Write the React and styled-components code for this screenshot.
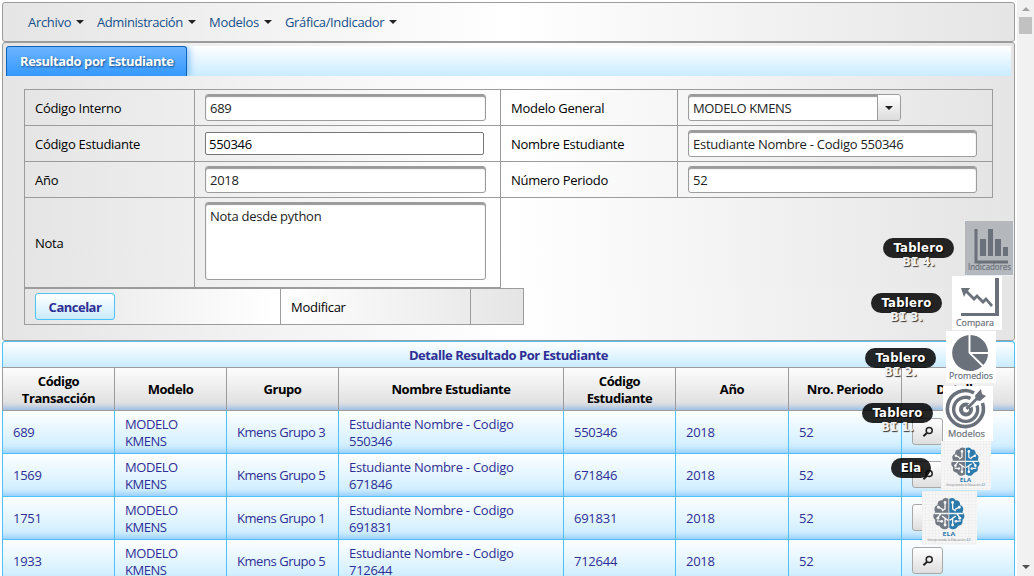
import React from 'react';
import styled, { createGlobalStyle, css } from 'styled-components';

const GlobalStyle = createGlobalStyle`
  * { box-sizing: border-box; }
  html, body { margin: 0; height: 100%; overflow: hidden; background: #fff; }
  body { font: 13px/17px "Open Sans", "Noto Sans", sans-serif; color: #000; }
`;

const line = '#9c9c9c';
const sky = '#4fc1fa';
const silver = 'linear-gradient(to right, #e5e5e5, #fff 50%, #e5e5e5)';

const Screen = styled.div`
  display: flex;
  width: 1034px;
  height: 576px;
  overflow: hidden;
  position: relative;
`;
const Page = styled.main`
  width: 1017px;
  flex: none;
  padding: 2px 2px 0;
`;
const Menubar = styled.nav`
  display: flex;
  align-items: center;
  gap: 13px;
  height: 40px;
  padding-left: 25px;
  border: 1px solid ${line};
  border-radius: 3px;
  background: ${silver};
`;
const MenuLink = styled.a`
  display: flex;
  align-items: center;
  width: ${p => p.$w}px;
  justify-content: space-between;
  color: #17508a;
  white-space: nowrap;
  letter-spacing: ${p => p.$ls}px;
`;
const Caret = styled.i`
  border: 4px solid transparent;
  border-top-color: #222;
  border-bottom: 0;
`;
const Panel = styled.section`
  height: 299px;
  padding: 3px;
  border: 1px solid ${line};
  border-radius: 3px;
  background: ${silver};
`;
const TabStrip = styled.div`
  height: 30px;
  display: flex;
  background: linear-gradient(#fff, #c9ecff);
`;
const Tab = styled.div`
  width: 181px;
  padding: 6px 0 0 13px;
  border: 1px solid #0f62b8;
  border-bottom: 0;
  border-radius: 3px 3px 0 0;
  background: linear-gradient(#6cb4ff, #3399ff);
  box-shadow: 2px 0 7px rgba(70, 160, 255, 0.65);
  clip-path: inset(0 -12px 0 0);
  color: #fff;
  font-weight: 700;
  letter-spacing: -0.43px;
  white-space: nowrap;
  text-shadow: 1px 1px 2px #1c4d80;
`;
const Form = styled.div`
  margin: 13px 0 0 18px;
  width: 969px;
`;
const FormRow = styled.div`
  display: grid;
  grid-template-columns: 170px 306px 177px 316px;
  height: ${p => p.$h || 36}px;
  background: ${silver};
`;
const Cell = styled.div`
  display: flex;
  align-items: center;
  padding-left: 10px;
  border: solid ${line};
  border-width: 1px 0 0 1px;
  white-space: nowrap;
  letter-spacing: -0.28px;
  ${p => p.$last && css`border-right-width: 1px;`}
  ${p => p.$bottom && css`border-bottom-width: 1px;`}
`;
const LabelCell = styled(Cell)`
  padding-top: 2px;
`;
const OpenCell = styled.div`
  border-top: 1px solid ${line};
  ${p => p.$edge && css`border-left: 1px solid ${line};`}
`;
const fieldLook = css`
  border: 1px solid ${line};
  border-radius: 3px;
  background: #fff;
  box-shadow: inset 0 2px 1px #999;
  color: #222;
`;
const Field = styled.div`
  ${fieldLook}
  width: ${p => p.$w}px;
  height: 27px;
  padding: 5px 4px 0;
  letter-spacing: -0.26px;
`;
const PlainField = styled.div`
  width: 279px;
  height: 23px;
  padding: 3px 3px 0;
  border: 1px solid #767676;
  border-radius: 2px;
  background: #fff;
`;
const Note = styled(Field)`
  height: 78px;
  margin-bottom: 3px;
`;
const Select = styled.div`
  ${fieldLook}
  display: flex;
  width: 213px;
  height: 27px;
  padding-left: 4px;
  letter-spacing: -0.36px;
`;
const SelectText = styled.span`
  flex: 1;
  padding-top: 5px;
`;
const SelectArrow = styled.span`
  display: flex;
  align-items: center;
  justify-content: center;
  width: 23px;
  border-left: 1px solid ${line};
  border-radius: 0 2px 2px 0;
  background: linear-gradient(#fff, #dcdcdc);
`;
const Actions = styled.div`
  display: grid;
  grid-template-columns: 256px 190px 54px;
  width: 500px;
  height: 37px;
  background: ${silver};
`;
const Cancel = styled.button`
  width: 80px;
  height: 27px;
  padding: 2px 0 0;
  border: 1px solid ${sky};
  border-radius: 3px;
  background: linear-gradient(#fff, #c9ecff);
  color: #2e2e94;
  font: inherit;
  font-weight: 700;
  letter-spacing: -0.5px;
`;
const Caption = styled.h2`
  margin: 0;
  height: 26px;
  padding-top: 5px;
  border: 1px solid ${sky};
  border-bottom: 0;
  border-radius: 3px 3px 0 0;
  background: linear-gradient(#fff, #c9ecff);
  color: #2e2e94;
  font-size: 13px;
  line-height: 17px;
  text-align: center;
  letter-spacing: -0.45px;
`;
const columns = '112px 112px 112px 225px 112px 113px 113px 114px';
const HeadRow = styled.div`
  display: grid;
  grid-template-columns: ${columns};
  height: 43px;
  background: linear-gradient(#fdfdfd, #dcdcdc);
  box-shadow: inset 0 -8px 6px -6px #86b6ea;
`;
const HeadCell = styled.div`
  display: flex;
  align-items: center;
  justify-content: center;
  padding: 1px 10px 0;
  border: solid ${line};
  border-width: 1px 0 0 1px;
  font-weight: 700;
  text-align: center;
  letter-spacing: -0.43px;
  &:last-child { border-right-width: 1px; }
`;
const DataRow = styled.div`
  display: grid;
  grid-template-columns: ${columns};
  height: 43px;
  background: linear-gradient(#fff, #c9ecff);
  box-shadow: inset 0 -8px 6px -6px #8cc6fc;
`;
const DataCell = styled.div`
  display: flex;
  align-items: center;
  padding: 1px 8px 0 10px;
  border: solid ${sky};
  border-width: 1px 0 0 1px;
  ${p => p.$first && css`border-top-color: ${line};`}
  color: #2e2e94;
  letter-spacing: ${p => (p.$tight ? -0.45 : -0.25)}px;
  &:last-child { border-right-width: 1px; }
`;
const ViewButton = styled.button`
  display: flex;
  align-items: center;
  justify-content: center;
  width: 31px;
  height: 27px;
  margin-bottom: 2px;
  padding: 0;
  border: 1px solid #a8a8a8;
  border-radius: 3px;
  background: linear-gradient(#fff, #dedede);
`;
const Scrollbar = styled.aside`
  display: flex;
  flex-direction: column;
  align-items: center;
  width: 17px;
  padding: 7px 0;
  background: #f1f1f1;
`;
const Arrow = styled.i`
  border: 4px solid transparent;
  ${p => p.$up
    ? css`border-bottom-color: #a3a3a3; border-top: 0;`
    : css`border-top-color: #505050; border-bottom: 0; margin-top: auto;`}
`;
const Thumb = styled.div`
  width: 13px;
  height: 17px;
  margin-top: 6px;
  background: #c1c1c1;
`;
const DockItem = styled.div`
  position: absolute;
  left: ${p => p.$x}px;
  top: ${p => p.$y}px;
  width: ${p => p.$w}px;
  height: ${p => p.$h}px;
  svg { display: block; }
`;
const DockLabel = styled.div`
  position: absolute;
  left: ${p => p.$x}px;
  top: ${p => p.$y}px;
  width: ${p => p.$w}px;
  color: #fff;
  font: 700 13px/20px "DejaVu Sans Condensed", "DejaVu Sans", sans-serif;
  font-stretch: condensed;
  text-align: center;
  text-shadow: 1px 1px 1px #000;
`;
const Pill = styled.div`
  height: 20px;
  border-radius: 10px;
  background: rgba(0, 0, 0, 0.85);
  letter-spacing: 0.25px;
`;
const Sub = styled.div`
  height: 16px;
  margin-top: -6px;
  color: #f4f4f4;
  font-size: 12.6px;
  text-shadow: 1px 1px 1px #333;
`;
const SlabI = styled.span`
  font-family: "DejaVu Sans Mono", monospace;
`;

const SearchIcon = () => (
  <svg width="12" height="12" viewBox="0 0 12 12" fill="none" stroke="#222">
    <circle cx="7.2" cy="4.6" r="3" strokeWidth="1.5" />
    <path d="M4.9 7 1.4 10.3" strokeWidth="2" />
  </svg>
);

const ink = '#6a717b';
const IconText = ({ x, y, size, w, fill = ink, bold, children }) => (
  <text x={x} y={y} fontSize={size} fill={fill} textAnchor="middle" textLength={w}
    lengthAdjust="spacingAndGlyphs"
    fontWeight={bold ? 700 : 400} stroke={bold ? 'none' : fill} strokeWidth=".2"
    fontFamily='"Open Sans", sans-serif'>{children}</text>
);

const BarsIcon = () => (
  <svg width="49" height="55" viewBox="0 0 49 55">
    <path d="M0 0h49v55H0z" fill="#e6eef3" />
    <path d="M0 0h48v54H0z" fill="#b4b8bc" />
    <path d="M9.5 8h3v31.5h30.5v3H9.5zM15 18h6v17h-6zM23 8h5v27h-5zM30 18h6v17h-6zM38 26h5v9h-5z" fill={ink} />
    <IconText x="24.5" y="49" size="9" w="43">Indicadores</IconText>
  </svg>
);
const TrendIcon = () => (
  <svg width="50" height="54" viewBox="0 0 50 54">
    <path d="M0 0h50v54H0z" fill="#fff" />
    <path d="M43 2h4v38H9v-3h34z" fill={ink} />
    <path d="M9 12h9l-2 3 6 6 3-3 6 6 3-3 7 8-2 2-5-6-3 3-6-6-3 3-8-8-2 4z" fill={ink} />
    <IconText x="23" y="50" size="9" w="38">Compara</IconText>
  </svg>
);
const PieIcon = () => (
  <svg width="50" height="52" viewBox="0 0 50 52">
    <path d="M0 0h50v52H0z" fill="#fff" />
    <path d="M22.5 4A18 18 0 1 0 36 35.5L22.5 22z" fill={ink} />
    <path d="M24.5 4A18 18 0 0 1 42 21H24.5z" fill={ink} />
    <path d="M26 23h16a17 17 0 0 1-4.7 11z" fill={ink} />
    <IconText x="25" y="47.5" size="9" w="44">Promedios</IconText>
  </svg>
);
const TargetIcon = () => (
  <svg width="50" height="55" viewBox="0 0 50 55">
    <path d="M0 0h50v55H0z" fill="#fff" />
    <g fill="none" stroke={ink}>
      <path d="M31 6.8A18 18 0 1 0 39.5 17" strokeWidth="3.6" />
      <path d="M27.5 12.4A12 12 0 1 0 34 19.5" strokeWidth="3.4" />
      <circle cx="23" cy="23.5" r="5" strokeWidth="4" />
      <path d="M26 20.5 36 10.5" strokeWidth="4.5" stroke="#fff" />
      <path d="M23.5 23 37 9.5" strokeWidth="2.8" />
    </g>
    <path d="M32 9.5l6-6.5 1 5 4 2-6 5-4-1z" fill={ink} />
    <IconText x="23.5" y="50.5" size="9" w="37">Modelos</IconText>
  </svg>
);
const half = 'M15.3 1.5C12-.2 9.6 1.3 9.2 3 6 2.6 4.3 5 4.7 7.5 1.6 8.4.8 11.5 2.4 14-.4 16.4.2 20 2.5 21.6 1.5 25 3.8 27.3 6.6 27.3 8 31 12.4 31.5 15.3 29z';
const BrainIcon = ({ w, h }) => (
  <svg width={w} height={h} viewBox="0 0 50 50" preserveAspectRatio="none">
    <defs>
      <pattern id={`grid${w}`} width="3" height="3" patternUnits="userSpaceOnUse">
        <path d="M0 0h3v3H0z" fill="#f7f7f7" /><path d="M0 .3h3M.3 0v3" stroke="#ebebeb" strokeWidth=".6" />
      </pattern>
    </defs>
    <path d="M0 0h50v50H0z" fill={`url(#grid${w})`} />
    {[false, true].map(right => (
      <g key={String(right)} transform={right ? 'translate(39 5.8) scale(-.93 .97)' : 'translate(9.8 5.8) scale(.93 .97)'}>
        <path d={half} fill={right ? '#2c79ab' : '#727983'} />
        <g fill="none" stroke="#f7f7f7" strokeWidth="1.3">
          <path d="M12 5v6l-3 2M5.5 9.5l4 2M1.5 15.5h14M8 15.5l-3 4M12 27v-7l-3-2M4 22.5l4.5.5M12 20l3 2" />
        </g>
        <g fill="#f7f7f7">
          <circle cx="12" cy="5" r="1.4" /><circle cx="5.5" cy="9.5" r="1.4" />
          <circle cx="5" cy="20" r="1.4" /><circle cx="12" cy="26.5" r="1.4" /><circle cx="8.8" cy="23" r="1.3" />
        </g>
      </g>
    ))}
    <IconText x="24.5" y="41.4" size="5.5" w="11.5" fill="#2c79ab" bold>ELA</IconText>
    <text x="5" y="46.4" fontSize="3" fill="#777" textLength="39" lengthAdjust="spacingAndGlyphs" fontFamily='"Open Sans", sans-serif'>
      Interpretando la Educación <tspan fill="#2c79ab">4.0</tspan>
    </text>
  </svg>
);

const menu = [['Archivo', 56, -0.3], ['Administración', 99, -0.4], ['Modelos', 63, -0.3], ['Gráfica/Indicador', 112, -0.35]];
const heads = ['Código Transacción', 'Modelo', 'Grupo', 'Nombre Estudiante', 'Código Estudiante', 'Año', 'Nro. Periodo', 'Detalle'];
const rows = [
  ['689', 'Kmens Grupo 3', '550346'],
  ['1569', 'Kmens Grupo 5', '671846'],
  ['1751', 'Kmens Grupo 1', '691831'],
  ['1933', 'Kmens Grupo 5', '712644'],
];
const labels = [[883, 238, 4], [871, 293, 3], [865, 348, 2], [862, 403, 1]];
const dock = [
  [965, 221, 49, 55, <BarsIcon />],
  [952, 276, 50, 54, <TrendIcon />],
  [946, 331, 50, 52, <PieIcon />],
  [943, 386, 50, 55, <TargetIcon />],
  [941, 441, 50, 49, <BrainIcon w={50} h={49} />],
  [922, 491, 55, 54, <BrainIcon w={55} h={54} />],
];

export default function App() {
  return (
    <Screen>
      <GlobalStyle />
      <Page>
        <Menubar>
          {menu.map(([name, w, ls]) => <MenuLink key={name} $w={w} $ls={ls}>{name}<Caret /></MenuLink>)}
        </Menubar>
        <Panel>
          <TabStrip><Tab>Resultado por Estudiante</Tab></TabStrip>
          <Form>
            <FormRow>
              <LabelCell>Código Interno</LabelCell>
              <Cell><Field $w={281}>689</Field></Cell>
              <LabelCell>Modelo General</LabelCell>
              <Cell $last>
                <Select><SelectText>MODELO KMENS</SelectText><SelectArrow><Caret /></SelectArrow></Select>
              </Cell>
            </FormRow>
            <FormRow>
              <LabelCell>Código Estudiante</LabelCell>
              <Cell><PlainField>550346</PlainField></Cell>
              <LabelCell>Nombre Estudiante</LabelCell>
              <Cell $last><Field $w={289}>Estudiante Nombre - Codigo 550346</Field></Cell>
            </FormRow>
            <FormRow>
              <LabelCell>Año</LabelCell>
              <Cell><Field $w={281}>2018</Field></Cell>
              <LabelCell>Número Periodo</LabelCell>
              <Cell $last><Field $w={289}>52</Field></Cell>
            </FormRow>
            <FormRow $h={91}>
              <LabelCell $bottom>Nota</LabelCell>
              <Cell $bottom><Note $w={281}>Nota desde python</Note></Cell>
              <OpenCell $edge />
              <OpenCell />
            </FormRow>
            <Actions>
              <Cell $bottom><Cancel>Cancelar</Cancel></Cell>
              <LabelCell $bottom>Modificar</LabelCell>
              <Cell $bottom $last />
            </Actions>
          </Form>
        </Panel>
        <Caption>Detalle Resultado Por Estudiante</Caption>
        <HeadRow>{heads.map(h => <HeadCell key={h}>{h}</HeadCell>)}</HeadRow>
        {rows.map(([id, group, code], i) => (
          <DataRow key={id}>
            {[id, 'MODELO KMENS', group, `Estudiante Nombre - Codigo ${code}`, code, '2018', '52'].map((v, c) => (
              <DataCell key={c} $first={i === 0} $tight={c === 1 || c === 2}>{v}</DataCell>
            ))}
            <DataCell $first={i === 0}><ViewButton><SearchIcon /></ViewButton></DataCell>
          </DataRow>
        ))}
      </Page>
      <Scrollbar><Arrow $up /><Thumb /><Arrow /></Scrollbar>
      {labels.map(([x, y, n]) => (
        <DockLabel key={n} $x={x} $y={y} $w={71}>
          <Pill>Tablero</Pill>
          <Sub>B<SlabI>I</SlabI> {n}.</Sub>
        </DockLabel>
      ))}
      <DockLabel $x={891} $y={458} $w={40}><Pill>Ela</Pill></DockLabel>
      {dock.map(([x, y, w, h, icon]) => (
        <DockItem key={y} $x={x} $y={y} $w={w} $h={h}>{icon}</DockItem>
      ))}
    </Screen>
  );
}
